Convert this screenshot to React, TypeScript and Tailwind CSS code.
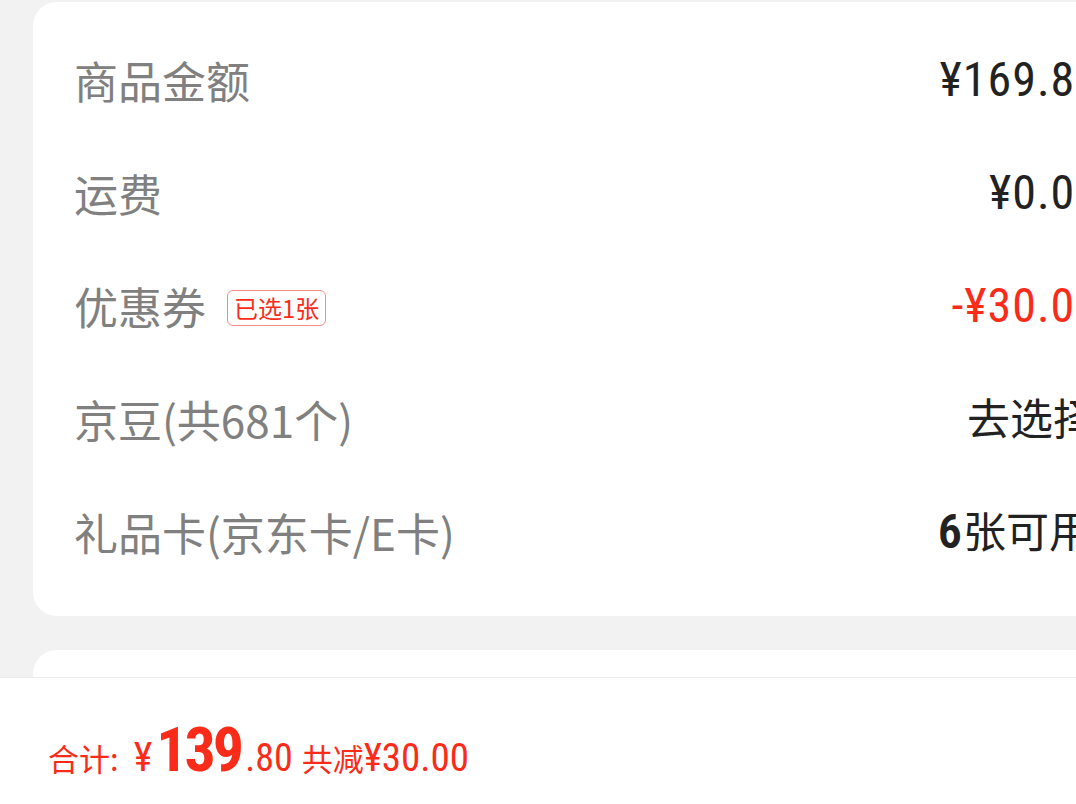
import React from 'react';

type Row = {
  label: string;
  tag?: string;
  value: React.ReactNode;
  tone: 'dark' | 'red';
};

const cjk = "font-['Noto_Sans_CJK_SC',sans-serif]";
const num = "font-['Roboto_Condensed','Noto_Sans_CJK_SC',sans-serif]";

const rows: Row[] = [
  { label: '商品金额', value: '¥169.80', tone: 'dark' },
  { label: '运费', value: '¥0.00', tone: 'dark' },
  { label: '优惠券', tag: '已选1张', value: '-¥30.00', tone: 'red' },
  {
    label: '京豆(共681个)',
    value: <span className={`${cjk} mr-[4px] tracking-normal text-[43px]`}>去选择</span>,
    tone: 'dark',
  },
  {
    label: '礼品卡(京东卡/E卡)',
    value: (
      <span className="mr-[8px]">
        <span className="font-semibold">6</span>
        <span className={`${cjk} tracking-normal text-[43px]`}>张可用</span>
      </span>
    ),
    tone: 'dark',
  },
];

const App = () => {
  return (
    <div className={`w-[1076px] h-[804px] overflow-hidden bg-[#f2f2f2] flex flex-col ${cjk}`}>
      <div className="flex-1 pt-[2px] overflow-hidden">
        {/* order summary card */}
        <div className="ml-[33px] w-[1100px] bg-white rounded-[24px] pl-[41px] pr-[33px] pt-[25px] pb-[24px]">
          {rows.map((row) => (
            <div key={row.label} className="h-[113px] pb-[8px] flex items-center justify-between">
              <div className="flex items-center">
                <span className="text-[44px] leading-none text-[#808080]">{row.label}</span>
                {row.tag && (
                  <span className="ml-[21px] mt-[4px] h-[36px] px-[6px] flex items-center rounded-[6px] border border-[#fc8b7f] text-[24px] leading-none text-[#fa2c19]">
                    {row.tag}
                  </span>
                )}
              </div>
              <span
                className={`${num} text-[48px] tracking-[1px] leading-none whitespace-nowrap ${
                  row.tone === 'red' ? 'text-[#fa2c19]' : 'text-[#222222]'
                }`}
              >
                {row.value}
              </span>
            </div>
          ))}
        </div>

        {/* next card peeking out */}
        <div className="ml-[33px] mt-[34px] w-[1100px] h-[40px] bg-white rounded-t-[24px]" />
      </div>

      {/* bottom total bar */}
      <div className="h-[127px] shrink-0 bg-white border-t border-[#ececec] pl-[48px] flex items-end pb-[23px] text-[#fa2c19]">
        <div className={`${num} flex items-baseline whitespace-nowrap`}>
          <span className={`${cjk} text-[31px] leading-none`}>合计:</span>
          <span className="ml-[15px] text-[40px] leading-none">¥</span>
          <span className="ml-[4px] text-[62px] leading-none font-bold tracking-[-3px]">139</span>
          <span className="ml-[4px] text-[38px] leading-none">.80</span>
          <span className={`${cjk} ml-[9px] text-[31px] leading-none`}>共减</span>
          <span className="text-[39px] leading-none">¥30.00</span>
        </div>
      </div>
    </div>
  );
};

export default App;
